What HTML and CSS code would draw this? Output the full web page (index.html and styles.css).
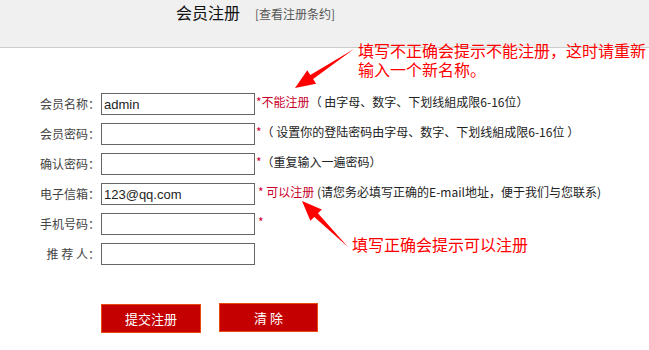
FILE: index.html
```html
<!DOCTYPE html>
<html lang="zh-CN">
<head>
<meta charset="utf-8">
<title>会员注册</title>
<link rel="stylesheet" href="styles.css">
</head>
<body>
<div class="page">
  <div class="header">
    <span class="title">会员注册</span>
    <a class="terms">[查看注册条约]</a>
  </div>

  <form class="form">
    <div class="row">
      <label class="label">会员名称：</label>
      <input class="field" type="text" value="admin">
      <span class="hint"><span class="star">*</span><span class="err">不能注册</span><span class="note">（ 由字母、数字、下划线組成限6-16位）</span></span>
    </div>
    <div class="row">
      <label class="label">会员密码：</label>
      <input class="field" type="password">
      <span class="hint"><span class="star">*</span><span class="note">（ 设置你的登陆密码由字母、数字、下划线組成限6-16位 ）</span></span>
    </div>
    <div class="row">
      <label class="label">确认密码：</label>
      <input class="field" type="password">
      <span class="hint"><span class="star">*</span><span class="note">（重复输入一遍密码）</span></span>
    </div>
    <div class="row">
      <label class="label">电子信箱：</label>
      <input class="field" type="text" value="123@qq.com">
      <span class="hint hint-pad"><span class="star">*</span> <span class="err">可以注册</span> <span class="note">(请您务必填写正确的E-mail地址，便于我们与您联系)</span></span>
    </div>
    <div class="row">
      <label class="label">手机号码：</label>
      <input class="field" type="text">
      <span class="hint hint-pad"><span class="star">*</span></span>
    </div>
    <div class="row">
      <label class="label">推 荐 人：</label>
      <input class="field" type="text">
    </div>

    <div class="buttons">
      <button class="btn btn-submit" type="button">提交注册</button>
      <button class="btn btn-clear" type="button">清 除</button>
    </div>
  </form>

  <div class="callout callout-top"><div class="callout-line">填写不正确会提示不能注册，这时请重新</div><div class="callout-line">输入一个新名称。</div></div>
  <div class="callout callout-bottom"><div class="callout-line">填写正确会提示可以注册</div></div>

  <svg class="arrows" width="649" height="350" viewBox="0 0 649 350">
    <polygon fill="#ff0000" points="354,49 313.1,79.1 316.1,83.7 295,88 307.3,70.3 310.3,74.9"/>
    <polygon fill="#ff0000" points="348,247 317.9,213.3 321.8,209.4 302,201 310.4,220.8 314.3,216.9"/>
  </svg>
</div>
</body>
</html>
```

FILE: styles.css
```css
* { box-sizing: border-box; }

html, body {
  margin: 0;
  padding: 0;
  background: #ffffff;
}

body {
  font-family: "Noto Sans CJK SC", "Liberation Sans", sans-serif;
  font-size: 12px;
  color: #222;
}

.page {
  position: relative;
  width: 649px;
  height: 350px;
  overflow: hidden;
}

.header {
  height: 48px;
  background: #f0f0f0;
  border-bottom: 1px solid #cccccc;
  display: flex;
  align-items: baseline;
  padding: 3px 0 0 176px;
}

.title {
  font-size: 16px;
  line-height: 18px;
  color: #111;
}

.terms {
  margin-left: 15px;
  font-size: 12px;
  line-height: 18px;
  color: #555;
}

.form {
  padding-top: 41px;
  margin: 0;
}

.row {
  display: flex;
  align-items: center;
  height: 30px;
}

.label {
  width: 100px;
  text-align: right;
  color: #444;
  font-size: 12px;
  line-height: 16px;
  margin-right: 1px;
  white-space: pre;
}

.field {
  width: 154px;
  height: 22px;
  margin: 0;
  border: 1px solid #666;
  padding: 0 2px;
  font-family: "Liberation Sans", Arial, sans-serif;
  font-size: 13px;
  color: #222;
  background: #fff;
  outline: none;
}

.hint {
  margin-left: 1px;
  font-size: 12px;
  line-height: 16px;
  white-space: pre;
  align-self: flex-start;
  margin-top: 5px;
}

.hint-pad { margin-left: 3px; }

.star { color: #d0003a; }
.err { color: #c8002a; }
.note { color: #222; }

.buttons {
  display: flex;
  gap: 18px;
  margin-top: 34px;
  padding-left: 101px;
  align-items: flex-start;
}

.btn {
  height: 29px;
  margin: 0;
  background: #c40000;
  border: 1px solid #e84a10;
  color: #fff;
  font-family: "Noto Sans CJK SC", sans-serif;
  font-size: 13px;
  line-height: 27px;
  padding: 0;
  white-space: pre;
}

.btn-submit { width: 100px; margin-top: 1px; }
.btn-clear { width: 99px; }

.callout {
  position: absolute;
  color: #ff0000;
  font-family: "Liberation Sans", "Noto Sans CJK SC", sans-serif;
  font-size: 16px;
  line-height: 19px;
  white-space: nowrap;
}

.callout-line { height: 19px; }

.callout-top { left: 358px; top: 42px; }
.callout-bottom { left: 352px; top: 236px; }

.arrows {
  position: absolute;
  left: 0;
  top: 0;
  pointer-events: none;
}
```
